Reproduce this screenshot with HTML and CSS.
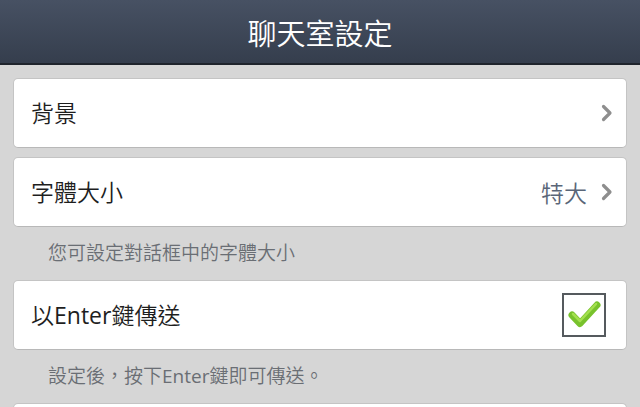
FILE: index.html
```html
<!DOCTYPE html>
<html lang="zh-Hant">
<head>
<meta charset="utf-8">
<title>聊天室設定</title>
<link rel="stylesheet" href="styles.css">
</head>
<body>
<header class="topbar"><h1 class="title">聊天室設定</h1></header>
<main class="content">
  <div class="card">
    <span class="label">背景</span>
    <span class="right">
      <svg class="chev" width="12" height="18" viewBox="0 0 12 18"><path d="M2.5 2.5 L9 9 L2.5 15.5" fill="none" stroke="#8e8e8e" stroke-width="3.2" stroke-linecap="round" stroke-linejoin="round"/></svg>
    </span>
  </div>
  <div class="card gap-small">
    <span class="label">字體大小</span>
    <span class="right">
      <span class="value">特大</span>
      <svg class="chev" width="12" height="18" viewBox="0 0 12 18"><path d="M2.5 2.5 L9 9 L2.5 15.5" fill="none" stroke="#8e8e8e" stroke-width="3.2" stroke-linecap="round" stroke-linejoin="round"/></svg>
    </span>
  </div>
  <p class="hint">您可設定對話框中的字體大小</p>
  <div class="card">
    <span class="label">以<span class="latin">Enter</span>鍵傳送</span>
    <span class="right">
      <span class="checkbox">
        <svg width="40" height="40" viewBox="0 0 40 40"><path d="M8 20 L16 28.5 L33 10" fill="none" stroke="#78c22c" stroke-width="7" stroke-linecap="round" stroke-linejoin="round"/><path d="M9 19 L16 26 L32 9" fill="none" stroke="#a4e04e" stroke-width="2.5" stroke-linecap="round" stroke-linejoin="round"/></svg>
      </span>
    </span>
  </div>
  <p class="hint">設定後，按下<span class="latin">Enter</span>鍵即可傳送。</p>
  <div class="card"></div>
</main>
</body>
</html>
```

FILE: styles.css
```css
html, body {
  margin: 0;
  padding: 0;
  height: 100%;
  overflow: hidden;
}
body {
  background: #d6d6d6;
  font-family: "Open Sans", "Noto Sans CJK TC", sans-serif;
}
.topbar {
  height: 63px;
  background: linear-gradient(#475163, #353e4d);
  border-bottom: 2px solid #1f242c;
  display: flex;
  align-items: center;
  justify-content: center;
}
.title {
  margin: 0;
  color: #ffffff;
  font-size: 29px;
  font-weight: 350;
  line-height: 1;
  font-family: "Noto Sans CJK TC", sans-serif;
  padding-top: 1px;
}
.content {
  padding: 13px 13px 0 13px;
}
.card {
  height: 68px;
  background: #ffffff;
  border: 1px solid #c4c4c4;
  border-bottom-color: #b8b8b8;
  border-radius: 5px;
  display: flex;
  align-items: center;
  justify-content: space-between;
  padding: 0 13px 0 17px;
}
.gap-small {
  margin-top: 9px;
}
.label {
  font-size: 23px;
  font-weight: 350;
  color: #1e1e1e;
  font-family: "Open Sans", "Noto Sans CJK TC", sans-serif;
  line-height: 1;
}
.latin {
  font-weight: 400;
}
.right {
  display: flex;
  align-items: center;
  gap: 14px;
}
.value {
  font-size: 23px;
  font-weight: 350;
  color: #5a6678;
  font-family: "Noto Sans CJK TC", sans-serif;
}
.chev {
  display: block;
}
.checkbox {
  width: 40px;
  height: 40px;
  border: 2px solid #555a5e;
  display: flex;
  align-items: center;
  justify-content: center;
  margin-right: 7px;
}
.checkbox svg {
  display: block;
}
.hint {
  margin: 0;
  height: 53px;
  display: flex;
  align-items: center;
  padding-left: 35px;
  font-size: 19px;
  font-weight: 350;
  color: #6a6e74;
  line-height: 1;
}
```
